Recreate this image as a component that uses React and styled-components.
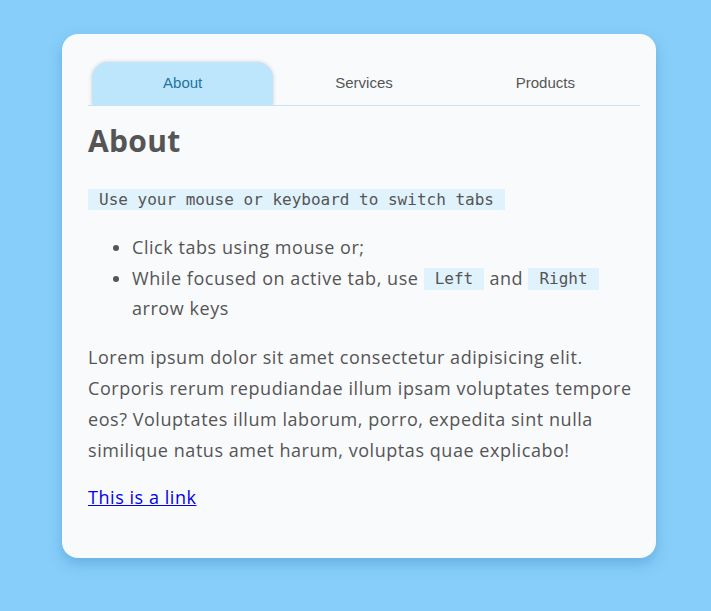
import React from 'react';
import styled, { createGlobalStyle } from 'styled-components';

const GlobalStyle = createGlobalStyle`
  html, body {
    margin: 0;
    padding: 0;
    background: #87cefa;
    min-height: 100%;
  }
  body {
    font-family: "Open Sans", "Liberation Sans", sans-serif;
  }
`;

const Page = styled.div`
  padding: 34px 0 40px 62px;
`;

const Card = styled.div`
  width: 594px;
  box-sizing: border-box;
  padding: 28px 16px 45px 26px;
  background: #f8fafc;
  border-radius: 16px;
  box-shadow: 0 6px 14px rgba(40, 120, 180, 0.35);
  color: #555;
`;

const TabList = styled.div`
  display: flex;
  padding: 0 4px;
  border-bottom: 1px solid #c8e2f2;
`;

const Tab = styled.button`
  flex: 1;
  height: 43px;
  padding: 0 0 2px;
  border: none;
  border-radius: 16px 16px 0 0;
  font-family: "Liberation Sans", Arial, sans-serif;
  font-size: 15px;
  cursor: pointer;
  background: ${(p) => (p.$active ? '#bde5fb' : 'transparent')};
  color: ${(p) => (p.$active ? '#2274a0' : '#555')};
  box-shadow: ${(p) => (p.$active ? '0 0 4px rgba(0, 0, 0, 0.18)' : 'none')};
  clip-path: inset(-6px -6px 0 -6px);
`;

const Panel = styled.div`
  font-family: "Open Sans", sans-serif;
  font-size: 18px;
  letter-spacing: 0.55px;
  line-height: 30.8px;
`;

const Heading = styled.h2`
  font-family: "Open Sans", sans-serif;
  font-size: 30px;
  font-weight: 700;
  letter-spacing: 0.3px;
  line-height: 36px;
  margin: 17px 0 24px;
  color: #555;
`;

const Code = styled.code`
  font-family: "DejaVu Sans Mono", "Liberation Mono", monospace;
  font-size: 16px;
  letter-spacing: 0;
  line-height: 21px;
  background: #e0f2fc;
  padding: 0 11px;
  display: inline-block;
`;

const InlineCode = styled(Code)`
  padding: 0 11px;
  line-height: 22px;
  vertical-align: 1px;
`;

const List = styled.ul`
  margin: 18px 0 18px;
  padding-left: 44px;
`;

const Text = styled.p`
  margin: 0 0 17px;
`;

const Link = styled.a`
  color: #0000ee;
`;

export default function App() {
  const [active, setActive] = React.useState(0);
  const tabs = ['About', 'Services', 'Products'];
  return (
    <Page>
      <GlobalStyle />
      <Card>
        <TabList role="tablist">
          {tabs.map((t, i) => (
            <Tab key={t} $active={i === active} onClick={() => setActive(i)}>
              {t}
            </Tab>
          ))}
        </TabList>
        <Panel>
          <Heading>About</Heading>
          <Code>Use your mouse or keyboard to switch tabs</Code>
          <List>
            <li>Click tabs using mouse or;</li>
            <li>
              While focused on active tab, use <InlineCode>Left</InlineCode> and{' '}
              <InlineCode>Right</InlineCode> arrow keys
            </li>
          </List>
          <Text>
            Lorem ipsum dolor sit amet consectetur adipisicing elit. Corporis rerum repudiandae
            illum ipsam voluptates tempore eos? Voluptates illum laborum, porro, expedita sint
            nulla similique natus amet harum, voluptas quae explicabo!
          </Text>
          <Link href="#">This is a link</Link>
        </Panel>
      </Card>
    </Page>
  );
}
